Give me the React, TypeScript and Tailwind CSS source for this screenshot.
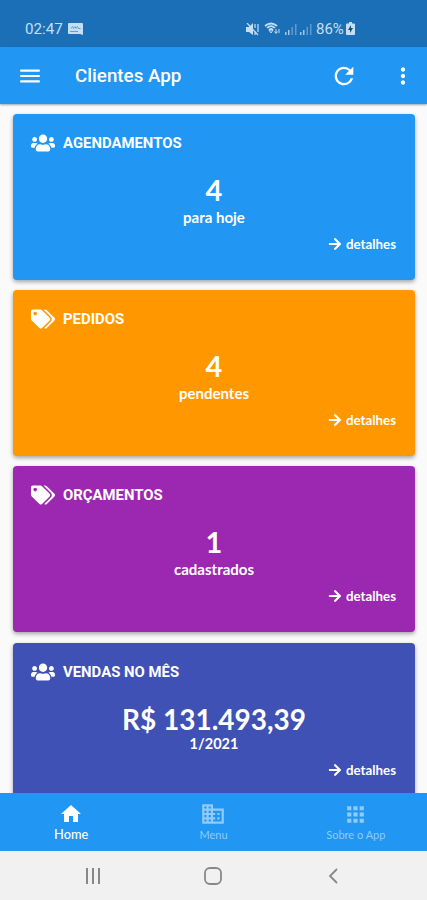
import type { ReactNode } from "react";
import { FaArrowRight, FaTags, FaUsers } from "react-icons/fa";
import { MdApps, MdDomain, MdHome, MdMenu, MdMoreVert, MdRefresh } from "react-icons/md";

type CardProps = {
  title: string;
  icon: ReactNode;
  value: string;
  caption: string;
  color: string;
  compact?: boolean;
};

function SummaryCard({ title, icon, value, caption, color, compact }: CardProps) {
  return (
    <section
      className={`h-[166px] shrink-0 rounded-[4px] pt-[18px] text-white shadow-[0_2px_4px_rgba(0,0,0,0.35)] ${color}`}
    >
      <div className="flex h-[22px] items-center gap-[8px] pl-[18px]">
        {icon}
        <h2 className="font-['Roboto',sans-serif] text-[14.9px] leading-[22px] font-bold whitespace-nowrap">
          {title}
        </h2>
      </div>
      <div className="mt-[18px] text-center font-['Lato',sans-serif] font-bold">
        <p className={compact ? "h-[34px] text-[28px] leading-[37px]" : "h-[36px] text-[29px] leading-[36px]"}>
          {value}
        </p>
        <p className={compact ? "h-[18px] text-[14.5px] leading-[18px]" : "h-[18px] text-[15px] leading-[18px]"}>
          {caption}
        </p>
      </div>
      <div
        className={`flex h-[18px] items-center justify-end gap-[4px] pr-[19px] ${compact ? "mt-[8px]" : "mt-[9px]"}`}
      >
        <FaArrowRight className="h-[14px] w-[14px]" />
        <span className="font-['Lato',sans-serif] text-[13.3px] leading-[18px] font-bold">detalhes</span>
      </div>
    </section>
  );
}

function Signal() {
  return (
    <svg width="12" height="12" viewBox="0 0 12 12" fill="currentColor">
      <path opacity=".8" d="M0 9h1.500v3H0zM3 7h1.500v5H3z" />
      <path opacity=".4" d="M6.500 4H8v8H6.500zM10 1h1.500v11H10z" />
    </svg>
  );
}

function StatusBar() {
  return (
    <div className="flex h-[47px] shrink-0 items-start bg-[#1b6fb6] pt-[20px] font-['Roboto',sans-serif] text-[15.2px] leading-[19px] text-[#c4dff5]">
      <span className="ml-[25px] w-[43px] whitespace-nowrap">02:47</span>
      <svg className="mt-[3px]" width="15" height="13" viewBox="0 0 15 13">
        <path d="M1 0h13a1 1 0 0 1 1 1v11l-3-1H1a1 1 0 0 1-1-1V1a1 1 0 0 1 1-1z" fill="currentColor" />
        <path d="M3 5.500l1.500-2 1 2 1.500-2 1 2 1.500-2 1 2h2M2 8.500h8" fill="none" stroke="#5f9ecf" strokeWidth="1" />
      </svg>
      <div className="ml-[163px] flex items-start">
        <svg className="mt-[3px] mr-[4px]" width="14" height="13" viewBox="0 0 14 13">
          <path d="M0 4h3l4-4v12L3 9H0z" fill="currentColor" />
          <path d="M1 0l11 12M9 1v4M9 8v4M12 1v8" fill="none" stroke="currentColor" strokeWidth="1.2" />
        </svg>
        <svg className="mt-[2px] mr-[4px]" width="17" height="13" viewBox="0 0 17 13" fill="none" stroke="currentColor">
          <path d="M1 4q6-5 12 0M3 6q4-4 8 0M5 8q2-2 4 0" strokeWidth="1.7" />
          <path d="M7 11l-2-3h4zM12 7v4M10.500 9.500l1.500 2 1.500-2M15 11V7" strokeWidth="1" />
        </svg>
        <span className="mt-[3px] mr-[3px]"><Signal /></span>
        <span className="mt-[3px] mr-[4px]"><Signal /></span>
        <span className="w-[30px] text-[15px] whitespace-nowrap">86%</span>
        <svg className="mt-[2px]" width="9" height="13" viewBox="0 0 9 13">
          <path d="M3 0h3v1.500h2a1 1 0 0 1 1 1V12a1 1 0 0 1-1 1H1a1 1 0 0 1-1-1V2.500a1 1 0 0 1 1-1h2z" fill="currentColor" />
          <path d="M5 3L2 8h2v3l3-5H5z" fill="#134d7c" />
        </svg>
      </div>
    </div>
  );
}

export default function App() {
  const people = <FaUsers className="h-[24px] w-[24px]" />;
  const tags = <FaTags className="h-[24px] w-[24px]" />;
  return (
    <div className="flex h-[900px] w-[427px] flex-col overflow-hidden bg-[#fafafa]">
      <StatusBar />
      <header className="z-10 flex h-[57px] shrink-0 items-center bg-[#2196f3] text-white shadow-[0_1px_2px_rgba(0,0,0,0.35)]">
        <MdMenu className="ml-[17px] h-[26px] w-[26px]" />
        <h1 className="ml-[32px] font-['Roboto',sans-serif] text-[18.8px] leading-[24px] font-medium whitespace-nowrap">
          Clientes App
        </h1>
        <MdRefresh className="ml-auto h-[28px] w-[28px]" />
        <MdMoreVert className="mr-[11px] ml-[32px] h-[26px] w-[26px]" />
      </header>
      <main className="flex min-h-0 flex-1 flex-col gap-[10.2px] overflow-hidden pt-[10px] pr-[12px] pl-[13px]">
        <SummaryCard title="AGENDAMENTOS" icon={people} value="4" caption="para hoje" color="bg-[#2196f3]" />
        <SummaryCard title="PEDIDOS" icon={tags} value="4" caption="pendentes" color="bg-[#ff9800]" />
        <SummaryCard title="ORÇAMENTOS" icon={tags} value="1" caption="cadastrados" color="bg-[#9c27b0]" />
        <SummaryCard title="VENDAS NO MÊS" icon={people} value="R$ 131.493,39" caption="1/2021" color="bg-[#3f51b5]" compact />
      </main>
      <nav className="grid h-[58px] shrink-0 grid-cols-3 bg-[#2196f3] font-['Lato',sans-serif] text-white">
        <a className="flex flex-col items-center pt-[9px]">
          <MdHome className="h-[24px] w-[24px]" />
          <span className="text-[12.8px] leading-[16px] font-medium">Home</span>
        </a>
        <a className="flex flex-col items-center pt-[8px] text-[#90cbf9]">
          <MdDomain className="h-[26px] w-[26px]" />
          <span className="text-[11px] leading-[16px]">Menu</span>
        </a>
        <a className="flex flex-col items-center pt-[9px] text-[#90cbf9]">
          <MdApps className="h-[25px] w-[25px]" />
          <span className="text-[11px] leading-[16px]">Sobre o App</span>
        </a>
      </nav>
      <footer className="flex h-[49px] shrink-0 items-center bg-[#f1f1f1] text-[#888]">
        <svg className="ml-[85px]" width="16" height="16" viewBox="0 0 16 16" fill="none" stroke="currentColor" strokeWidth="2">
          <path d="M2 0v16M8 0v16M14 0v16" />
        </svg>
        <svg className="ml-[103px]" width="18" height="18" viewBox="0 0 18 18" fill="none" stroke="currentColor" strokeWidth="1.8">
          <rect x="1" y="1" width="16" height="16" rx="5" />
        </svg>
        <svg className="ml-[106px]" width="10" height="16" viewBox="0 0 10 16" fill="none" stroke="currentColor" strokeWidth="1.8">
          <path d="M9 1L2 8l7 7" />
        </svg>
      </footer>
    </div>
  );
}
